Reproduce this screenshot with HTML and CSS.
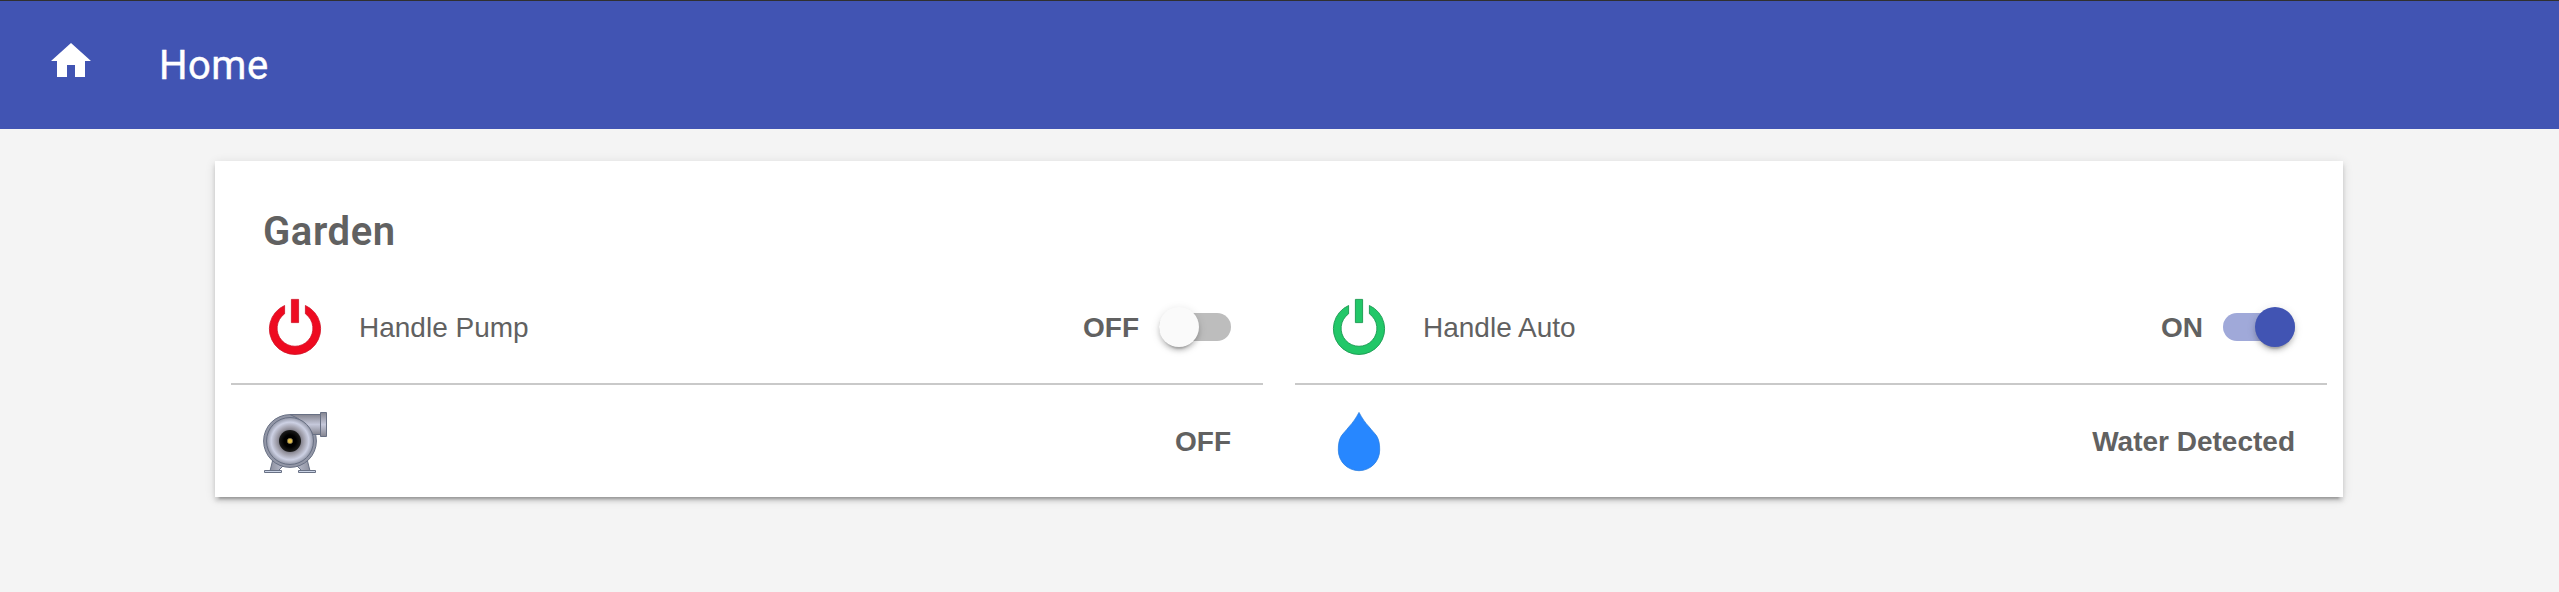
FILE: index.html
```
<!DOCTYPE html>
<html lang="en">
<head>
<meta charset="utf-8">
<title>Home</title>
<link rel="stylesheet" href="styles.css">
</head>
<body>
<header class="toolbar">
  <svg class="home-icon" viewBox="0 0 24 24"><path fill="#fff" d="M10 20v-6h4v6h5v-8h3L12 3 2 12h3v8z"/></svg>
  <h1 class="toolbar-title">Home</h1>
</header>
<main class="card">
  <h2 class="card-title">Garden</h2>
  <div class="grid">
    <div class="row row-line">
      <svg class="icon" viewBox="0 0 64 64"><g fill="#ee0a20" stroke="#cf1024" stroke-width=".8"><path d="M21.6 10.5A25.6 25.6 0 1 0 42.400 10.5V18.8A17.9 17.9 0 1 1 21.6 18.8Z"/><path d="M28.4 4.400h7.2v23.2h-7.2z"/></g></svg>
      <span class="label">Handle Pump</span>
      <span class="value">OFF</span>
      <span class="switch"><span class="thumb"></span></span>
    </div>
    <div class="row row-line">
      <svg class="icon" viewBox="0 0 64 64"><g fill="#22c768" stroke="#17994f" stroke-width=".9"><path d="M21.6 10.5A25.6 25.6 0 1 0 42.4 10.5V18.8A17.9 17.9 0 1 1 21.6 18.8Z"/><path d="M28.4 4.4h7.2v23.2h-7.2z"/></g></svg>
      <span class="label">Handle Auto</span>
      <span class="value">ON</span>
      <span class="switch switch-on"><span class="thumb"></span></span>
    </div>
    <div class="row">
      <svg class="icon" viewBox="0 0 64 64">
        <defs>
          <linearGradient id="pipe" x1="0" y1="0" x2="0" y2="1"><stop offset="0" stop-color="#858590"/><stop offset=".5" stop-color="#c5c8da"/><stop offset="1" stop-color="#858590"/></linearGradient>
          <linearGradient id="leg"><stop offset="0" stop-color="#8d909f"/><stop offset=".5" stop-color="#ced2e2"/><stop offset="1" stop-color="#8d909f"/></linearGradient>
          <radialGradient id="shell"><stop offset=".42" stop-color="#777681"/><stop offset=".58" stop-color="#9f9eaa"/><stop offset=".8" stop-color="#cdd1e4"/><stop offset="1" stop-color="#9195a5"/></radialGradient>
          <radialGradient id="hole"><stop offset=".55" stop-color="#000"/><stop offset="1" stop-color="#1c1c1c"/></radialGradient>
        </defs>
        <g stroke="#687084">
          <path fill="url(#leg)" d="M10 50 7 62H15L22 55ZM44 50 47 62H39L32 55Z"/>
          <path fill="#cbd4e6" d="M1.5 61.5h17v2h-17zM35.5 61.5h17v2h-17z"/>
          <circle cx="27" cy="32" r="26.4" fill="#9296a6"/>
          <path fill="url(#pipe)" d="M27 5.5H57.5V25.5H50Q43 12 27 5.5Z"/>
          <path fill="url(#pipe)" d="M57.5 3.5h6v24h-6z"/>
          <circle cx="27" cy="32" r="23.5" fill="url(#shell)"/>
        </g>
        <circle cx="27" cy="32" r="11" fill="url(#hole)"/>
        <circle cx="27" cy="32" r="2.7" fill="#dfbc4a" stroke="#666052" stroke-width=".6"/>
      </svg>
      <span class="value">OFF</span>
    </div>
    <div class="row">
      <svg class="icon" viewBox="0 0 64 64"><path fill="#2787ff" stroke="#2178dc" stroke-width=".7" d="M32 3.400C35 9 38 13.500 42.200 18C45 21.500 47.500 24 49.700 27C52 31 52.700 35 52.700 41A20.700 20.700 0 0 1 11.300 41C11.300 35 12 31 14.300 27C16.500 24 19 21.500 21.800 18C26 13.500 29 9 32 3.400Z"/></svg>
      <span class="value">Water Detected</span>
    </div>
  </div>
</main>
</body>
</html>
```
FILE: styles.css
```
* { box-sizing: border-box; }
body {
  margin: 0;
  min-height: 592px;
  background: #f4f4f4;
  color: #616161;
  font-family: "Liberation Sans", Arial, sans-serif;
  font-size: 28px;
}
.toolbar {
  display: flex;
  align-items: flex-start;
  height: 129px;
  padding: 36px 47px 0;
  border-top: 1px solid #303030;
  background: #4154b3;
  color: #fff;
}
.home-icon { width: 48px; height: 48px; }
.toolbar-title {
  margin: 5px 0 0 64px;
  font: 400 40px/48px Roboto, sans-serif;
  letter-spacing: .5px;
  -webkit-text-stroke: .4px;
}
.card {
  width: 2128px;
  height: 336px;
  margin: 32px 0 0 215px;
  padding: 47px 16px 0;
  background: #fff;
  box-shadow: 0 6px 2px -4px rgba(0,0,0,.2), 0 4px 4px rgba(0,0,0,.14), 0 2px 10px rgba(0,0,0,.12);
}
.card-title {
  height: 63px;
  margin: 0 0 0 32px;
  font: 600 40px/48px Roboto, sans-serif;
  letter-spacing: .6px;
}
.grid {
  display: grid;
  grid-template-columns: 1fr 1fr;
  column-gap: 32px;
}
.row {
  display: flex;
  align-items: center;
  height: 112px;
  padding: 0 32px;
}
.row-line { height: 114px; border-bottom: 2px solid #c9c9c9; }
.icon { width: 64px; height: 64px; }
.label { margin-left: 32px; padding-top: 2px; }
.value { margin-left: auto; padding-top: 2px; font-weight: 700; }
.switch {
  display: flex;
  align-items: center;
  width: 72px;
  height: 28px;
  margin-left: 20px;
  border-radius: 14px;
  background: #bdbdbd;
}
.thumb {
  flex: none;
  width: 40px;
  height: 40px;
  border-radius: 50%;
  background: #fafafa;
  box-shadow: 0 6px 2px -4px rgba(0,0,0,.2), 0 4px 4px rgba(0,0,0,.14), 0 2px 10px rgba(0,0,0,.12);
}
.switch-on { justify-content: flex-end; background: #a0a9d9; }
.switch-on .thumb { background: #4154b3; }
```
